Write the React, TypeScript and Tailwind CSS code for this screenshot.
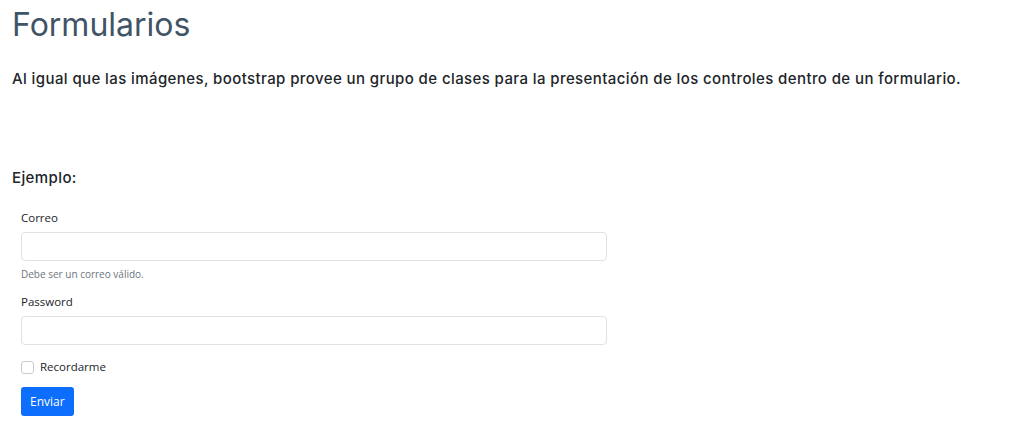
export default function App() {
  return (
    <div className="min-h-screen bg-white px-3 pt-[6px] text-[#212529]">
      <h1 className="text-[32px] leading-[38px] font-normal text-[#415466] [font-family:Inter,Lato,sans-serif]">
        Formularios
      </h1>
      <p className="mt-[24px] text-[15px] font-medium leading-[22px] tracking-[0.4px] [font-family:Inter,'DejaVu_Sans',sans-serif]">
        Al igual que las imágenes, bootstrap provee un grupo de clases para la presentación de los controles dentro de un formulario.
      </p>

      <h5 className="mt-[77px] text-[15px] font-medium leading-[22px] tracking-[0.4px] [font-family:Inter,'DejaVu_Sans',sans-serif]">
        Ejemplo:
      </h5>

      <form className="mt-[20px] w-[604px] px-[9px] text-[11.5px] [font-family:'Open_Sans',sans-serif]">
        <div className="mb-[12px]">
          <label className="mb-[5px] block leading-[18px]">Correo</label>
          <input
            type="email"
            className="block h-[29px] w-full rounded-[4px] border border-[#dee2e6] bg-white px-[9px]"
          />
          <div className="mt-[6px] text-[10px] leading-[14px] text-[#6c757d]">Debe ser un correo válido.</div>
        </div>
        <div className="mb-[13px]">
          <label className="mb-[5px] block leading-[18px]">Password</label>
          <input
            type="password"
            className="block h-[29px] w-full rounded-[4px] border border-[#dee2e6] bg-white px-[9px]"
          />
        </div>
        <div className="mb-[11px] flex items-center gap-[6px]">
          <span className="h-[13px] w-[13px] rounded-[3px] border border-[#c6ccd2] bg-white" />
          <label className="leading-[18px]">Recordarme</label>
        </div>
        <button
          type="button"
          className="h-[29px] rounded-[3px] bg-[#0d6efd] px-[9px] text-[12px] text-white"
        >
          Enviar
        </button>
      </form>
    </div>
  );
}
